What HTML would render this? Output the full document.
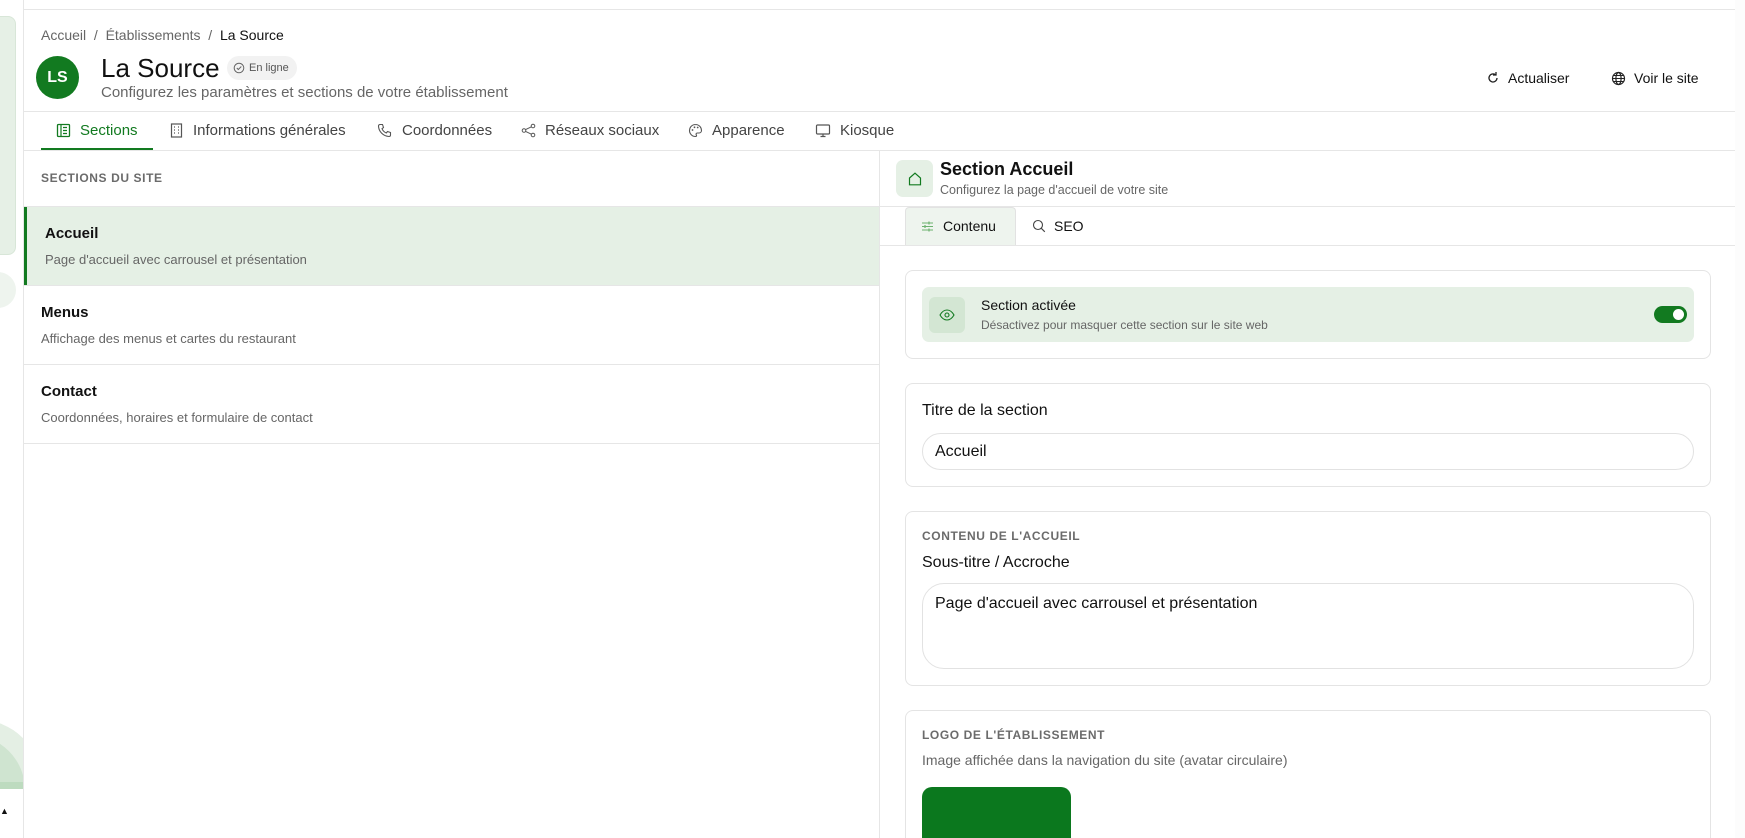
<!DOCTYPE html>
<html><head><meta charset="utf-8"><style>
*{box-sizing:border-box;margin:0;padding:0}
html,body{width:1745px;height:838px;overflow:hidden}
body{background:#fff;font-family:"Liberation Sans",sans-serif;color:#111;position:relative}
#w{position:absolute;left:0;top:0;width:1745px;height:838px;overflow:hidden}
.a{position:absolute}
.g{color:#666}
.line{position:absolute;background:#e6e6e6}
.card{position:absolute;border:1px solid #e4e4e4;border-radius:8px;background:#fff}
.cap{font-size:12px;font-weight:bold;letter-spacing:.6px;color:#6b6b6b}
svg{display:block}
</style></head><body><div id="w">
<!-- left sidebar strip -->
<div class="a" style="left:0;top:0;width:23px;height:838px;background:#fff;overflow:hidden">
<div class="a" style="left:-10px;top:16px;width:26px;height:239px;background:#e6f0e6;border:1px solid #d8e6d8;border-radius:8px"></div>
<div class="a" style="left:-20px;top:272px;width:36px;height:36px;border-radius:50%;background:#eef4ee"></div>
<div class="a" style="left:0;top:700px;width:23px;height:89px;overflow:hidden"><div class="a" style="left:-80px;top:20px;width:120px;height:120px;border-radius:50%;background:#e4efe4"></div><div class="a" style="left:-85px;top:35px;width:110px;height:110px;border-radius:50%;background:#cfe4d0"></div><div class="a" style="left:0;top:82px;width:23px;height:7px;background:#bddbbf"></div></div>
<div class="a" style="left:0;top:806px;font-size:9px">▲</div>
</div>
<div class="line" style="left:23px;top:0;width:1px;height:838px"></div>
<div class="a" style="left:1735px;top:0;width:10px;height:838px;background:#fcfcfc"></div>
<div class="line" style="left:24px;top:9px;width:1711px;height:1px"></div>

<!-- header -->
<div class="a g" style="left:41px;top:27px;font-size:14px">Accueil&nbsp; / &nbsp;Établissements&nbsp; / &nbsp;<span style="color:#111">La Source</span></div>
<div class="a" style="left:36px;top:56px;width:43px;height:43px;border-radius:50%;background:#127a20;color:#fff;font-weight:bold;font-size:16px;display:flex;align-items:center;justify-content:center">LS</div>
<div class="a" style="left:101px;top:53px;font-size:26px;font-weight:500">La Source</div>
<div class="a" style="left:227px;top:56px;width:70px;height:24px;border-radius:12px;background:#f2f2f2;font-size:11px;color:#555;display:flex;align-items:center;padding-left:6px"><svg width="12" height="12" viewBox="0 0 12 12" style="margin-right:4px"><circle cx="6" cy="6" r="4.8" fill="none" stroke="#666" stroke-width="1"/><path d="M3.8 6l1.5 1.5 3-3" fill="none" stroke="#666" stroke-width="1"/></svg>En ligne</div>
<div class="a g" style="left:101px;top:84px;font-size:15px">Configurez les paramètres et sections de votre établissement</div>
<div class="a" style="left:1486px;top:70px;font-size:14px;display:flex;align-items:center"><svg width="14" height="14" viewBox="0 0 14 14" style="margin-right:8px"><path d="M11 7a4 4 0 1 1-1.3-3" fill="none" stroke="#222" stroke-width="1.3"/><path d="M10 1v3H7" fill="none" stroke="#222" stroke-width="1.3"/></svg>Actualiser</div>
<div class="a" style="left:1611px;top:70px;font-size:14px;display:flex;align-items:center"><svg width="15" height="15" viewBox="0 0 15 15" style="margin-right:8px"><circle cx="7.5" cy="7.5" r="6" fill="none" stroke="#222" stroke-width="1.2"/><ellipse cx="7.5" cy="7.5" rx="2.6" ry="6" fill="none" stroke="#222" stroke-width="1.2"/><path d="M1.5 7.5h12M2.5 4.5h10M2.5 10.5h10" stroke="#222" stroke-width="1"/></svg>Voir le site</div>
<div class="line" style="left:24px;top:111px;width:1711px;height:1px"></div>

<!-- tabs -->
<div class="a" style="left:56px;top:122px;font-size:15px;color:#127a20;display:flex;align-items:center"><svg width="15" height="15" viewBox="0 0 15 15" style="margin-right:9px"><rect x="1.5" y="1.5" width="12" height="12" rx="1" fill="none" stroke="#127a20" stroke-width="1.3"/><path d="M5 1.5v12M7 4.5h4M7 7.5h4M7 10.5h4" stroke="#127a20" stroke-width="1.2"/></svg>Sections</div>
<div class="a" style="left:41px;top:148px;width:112px;height:3px;background:#127a20"></div>
<div class="a" style="left:170px;top:122px;font-size:15px;color:#444;display:flex;align-items:center"><svg width="13" height="15" viewBox="0 0 13 15" style="margin-right:10px"><rect x="1.5" y="1" width="10" height="13" fill="none" stroke="#555" stroke-width="1.2"/><path d="M4 4h1M8 4h1M4 7h1M8 7h1M4 10h1M8 10h1" stroke="#555" stroke-width="1.2"/></svg>Informations générales</div>
<div class="a" style="left:377px;top:122px;font-size:15px;color:#444;display:flex;align-items:center"><svg width="15" height="15" viewBox="0 0 15 15" style="margin-right:10px"><path d="M3 1.5l2.5 0 1 3-1.5 1.2a8 8 0 0 0 4.3 4.3l1.2-1.5 3 1v2.5a1.5 1.5 0 0 1-1.5 1.5A11 11 0 0 1 1.5 3 1.5 1.5 0 0 1 3 1.5z" fill="none" stroke="#555" stroke-width="1.1"/></svg>Coordonnées</div>
<div class="a" style="left:521px;top:122px;font-size:15px;color:#444;display:flex;align-items:center"><svg width="15" height="15" viewBox="0 0 15 15" style="margin-right:9px"><circle cx="12" cy="3" r="1.8" fill="none" stroke="#555"/><circle cx="3" cy="7.5" r="1.8" fill="none" stroke="#555"/><circle cx="12" cy="12" r="1.8" fill="none" stroke="#555"/><path d="M4.6 6.6l5.8-2.8M4.6 8.4l5.8 2.8" stroke="#555"/></svg>Réseaux sociaux</div>
<div class="a" style="left:688px;top:122px;font-size:15px;color:#444;display:flex;align-items:center"><svg width="15" height="15" viewBox="0 0 15 15" style="margin-right:9px"><path d="M7.5 1.5a6 6 0 0 0 0 12c1 0 1.3-.8.8-1.6-.6-.9 0-1.9 1-1.9h1.7a2.5 2.5 0 0 0 2.5-2.5c0-3.3-2.7-6-6-6z" fill="none" stroke="#555" stroke-width="1.1"/><circle cx="4.5" cy="7" r=".9" fill="#555"/><circle cx="6.5" cy="4.3" r=".9" fill="#555"/><circle cx="9.7" cy="4.5" r=".9" fill="#555"/></svg>Apparence</div>
<div class="a" style="left:815px;top:122px;font-size:15px;color:#444;display:flex;align-items:center"><svg width="16" height="15" viewBox="0 0 16 15" style="margin-right:9px"><rect x="1.5" y="2" width="13" height="9" rx="1" fill="none" stroke="#555" stroke-width="1.2"/><path d="M5.5 13.5h5M8 11v2.5" stroke="#555" stroke-width="1.2"/></svg>Kiosque</div>
<div class="line" style="left:24px;top:150px;width:1711px;height:1px"></div>

<!-- left panel -->
<div class="line" style="left:879px;top:151px;width:1px;height:687px"></div>
<div class="a cap" style="left:41px;top:171px">SECTIONS DU SITE</div>
<div class="line" style="left:24px;top:206px;width:855px;height:1px"></div>
<div class="a" style="left:24px;top:207px;width:855px;height:78px;background:#e5f0e5;border-left:3px solid #127a20"></div>
<div class="a" style="left:45px;top:225px;font-size:15px;font-weight:bold">Accueil</div>
<div class="a g" style="left:45px;top:252px;font-size:13px">Page d'accueil avec carrousel et présentation</div>
<div class="line" style="left:24px;top:285px;width:855px;height:1px"></div>
<div class="a" style="left:41px;top:304px;font-size:15px;font-weight:bold">Menus</div>
<div class="a g" style="left:41px;top:331px;font-size:13px">Affichage des menus et cartes du restaurant</div>
<div class="line" style="left:24px;top:364px;width:855px;height:1px"></div>
<div class="a" style="left:41px;top:383px;font-size:15px;font-weight:bold">Contact</div>
<div class="a g" style="left:41px;top:410px;font-size:13px">Coordonnées, horaires et formulaire de contact</div>
<div class="line" style="left:24px;top:443px;width:855px;height:1px"></div>

<!-- right panel header -->
<div class="a" style="left:896px;top:160px;width:37px;height:37px;border-radius:7px;background:#e5f0e5;display:flex;align-items:center;justify-content:center"><svg width="16" height="16" viewBox="0 0 16 16"><path d="M2.5 7L8 2.2 13.5 7v6.8h-11z" fill="none" stroke="#127a20" stroke-width="1.2"/></svg></div>
<div class="a" style="left:940px;top:159px;font-size:18px;font-weight:bold">Section Accueil</div>
<div class="a g" style="left:940px;top:183px;font-size:12.5px">Configurez la page d'accueil de votre site</div>
<div class="line" style="left:880px;top:206px;width:855px;height:1px"></div>
<div class="a" style="left:905px;top:207px;width:111px;height:39px;background:#eef4ee;border:1px solid #e2e2e2;border-bottom:none;border-radius:4px 4px 0 0"></div>
<div class="a" style="left:921px;top:218px;font-size:14px;display:flex;align-items:center"><svg width="13" height="13" viewBox="0 0 13 13" style="margin-right:9px"><path d="M1 3h11M1 6.5h11M1 10h11" stroke="#6cb26f" stroke-width="1"/><path d="M8 1.5v3M4 5v3M8 8.5v3" stroke="#6cb26f" stroke-width="1.2"/></svg>Contenu</div>
<div class="a" style="left:1032px;top:218px;font-size:14px;display:flex;align-items:center"><svg width="14" height="14" viewBox="0 0 14 14" style="margin-right:8px"><circle cx="6" cy="6" r="4.5" fill="none" stroke="#444" stroke-width="1.1"/><path d="M9.3 9.3l3.5 3.5" stroke="#444" stroke-width="1.1"/></svg>SEO</div>
<div class="line" style="left:880px;top:245px;width:855px;height:1px"></div>

<!-- card 1 -->
<div class="card" style="left:905px;top:270px;width:806px;height:89px"></div>
<div class="a" style="left:922px;top:287px;width:772px;height:55px;border-radius:7px;background:#e5f0e5"></div>
<div class="a" style="left:929px;top:297px;width:36px;height:36px;border-radius:6px;background:#d3e6d3;display:flex;align-items:center;justify-content:center"><svg width="16" height="12" viewBox="0 0 16 12"><path d="M1 6C3 2.5 5.5 1 8 1s5 1.5 7 5c-2 3.5-4.5 5-7 5S3 9.5 1 6z" fill="none" stroke="#127a20" stroke-width="1.1"/><circle cx="8" cy="6" r="2" fill="none" stroke="#127a20" stroke-width="1.1"/></svg></div>
<div class="a" style="left:981px;top:297px;font-size:14px">Section activée</div>
<div class="a g" style="left:981px;top:318px;font-size:12px">Désactivez pour masquer cette section sur le site web</div>
<div class="a" style="left:1654px;top:306px;width:33px;height:17px;border-radius:9px;background:#127a20"><div class="a" style="left:19px;top:3px;width:11px;height:11px;border-radius:50%;background:#fff"></div></div>

<!-- card 2 -->
<div class="card" style="left:905px;top:383px;width:806px;height:104px"></div>
<div class="a" style="left:922px;top:402px;font-size:16px">Titre de la section</div>
<div class="a" style="left:922px;top:433px;width:772px;height:37px;border:1px solid #e2e2e2;border-radius:19px;font-size:16px;padding:9px 12px">Accueil</div>

<!-- card 3 -->
<div class="card" style="left:905px;top:511px;width:806px;height:175px"></div>
<div class="a cap" style="left:922px;top:529px">CONTENU DE L'ACCUEIL</div>
<div class="a" style="left:922px;top:554px;font-size:16px">Sous-titre / Accroche</div>
<div class="a" style="left:922px;top:583px;width:772px;height:86px;border:1px solid #e2e2e2;border-radius:22px;font-size:16px;padding:11px 12px">Page d'accueil avec carrousel et présentation</div>

<!-- card 4 -->
<div class="card" style="left:905px;top:710px;width:806px;height:140px"></div>
<div class="a cap" style="left:922px;top:728px">LOGO DE L'ÉTABLISSEMENT</div>
<div class="a g" style="left:922px;top:752px;font-size:14px">Image affichée dans la navigation du site (avatar circulaire)</div>
<div class="a" style="left:922px;top:787px;width:149px;height:60px;border-radius:10px 10px 0 0;background:#0b781e"></div>
</div></body></html>
